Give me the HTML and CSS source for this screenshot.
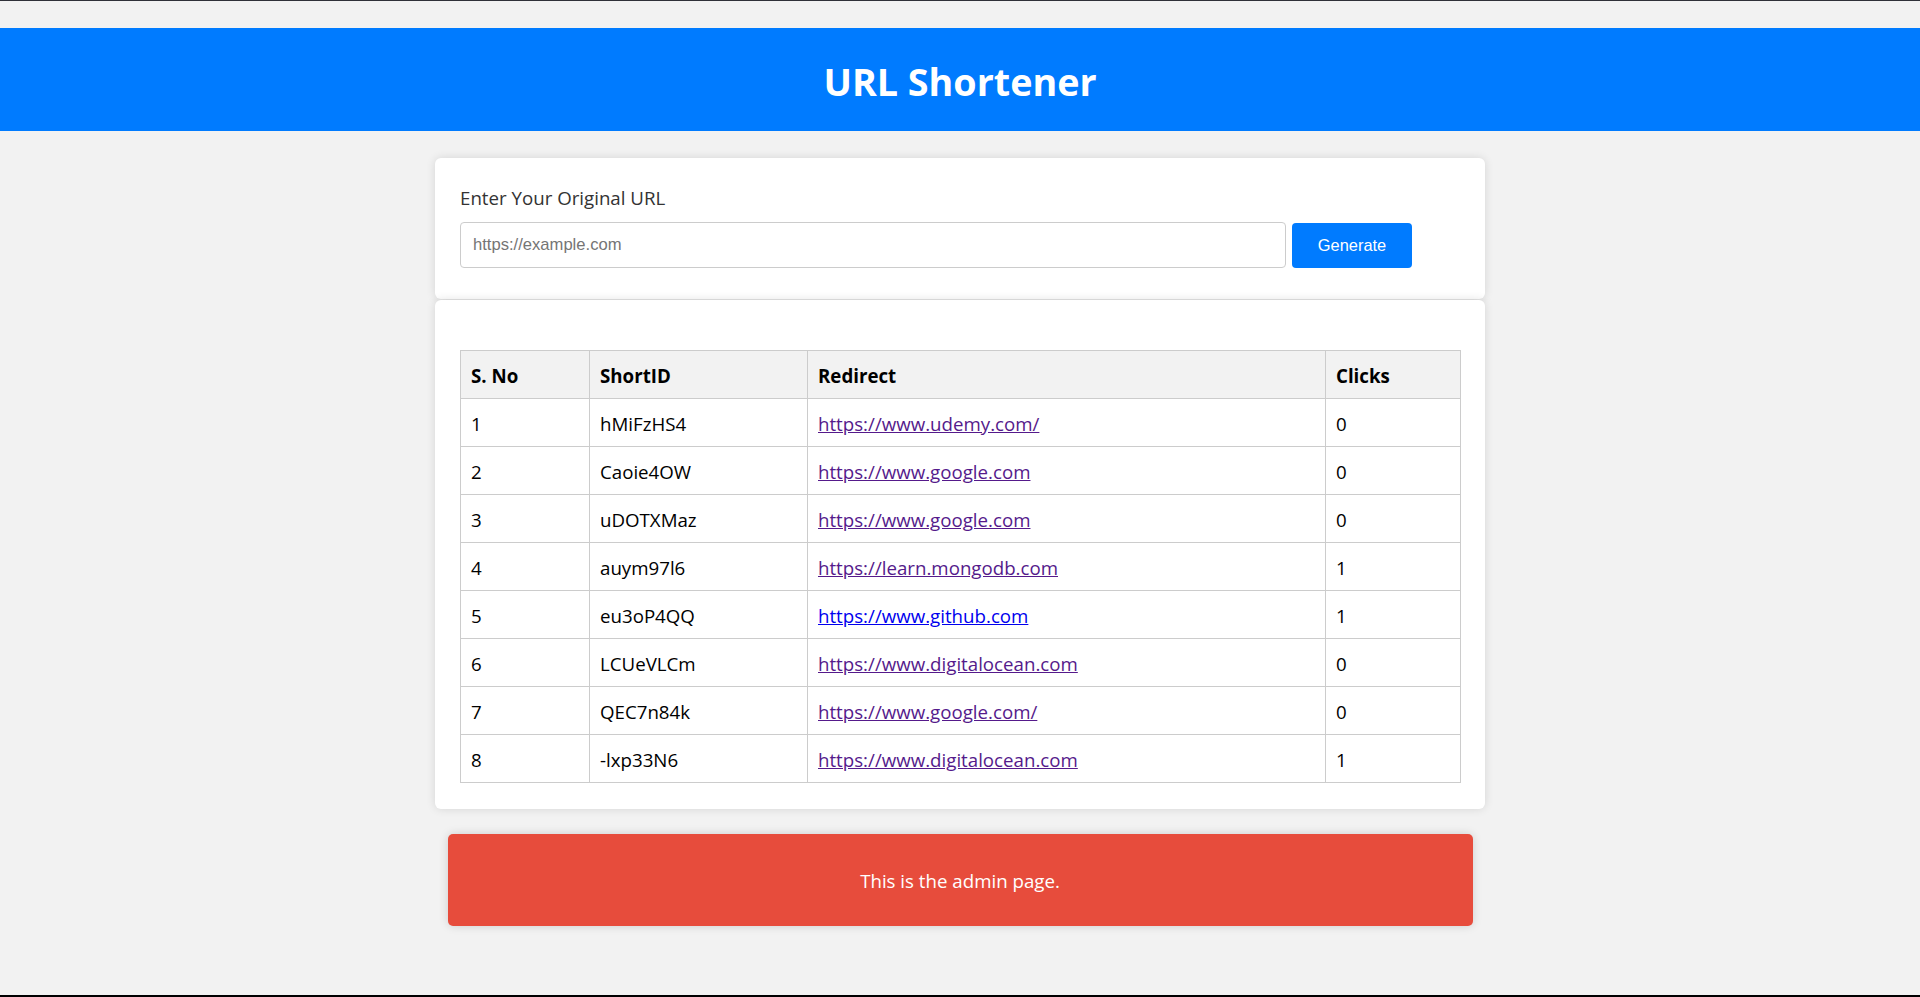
FILE: index.html
```html
<!DOCTYPE html>
<html lang="en">
<head>
<meta charset="utf-8">
<title>URL Shortener</title>
<link rel="stylesheet" href="styles.css">
</head>
<body>
<div class="topline"></div>
<header class="site-header">
  <h1 class="title">URL Shortener</h1>
</header>
<main class="container">
  <section class="card form-card">
    <label class="field-label" for="url">Enter Your Original URL</label>
    <form class="url-form">
      <input class="url-input" id="url" type="text" placeholder="https://example.com">
      <button class="gen-btn" type="button">Generate</button>
    </form>
  </section>
  <section class="card table-card">
    <table class="url-table">
      <colgroup>
        <col class="c1"><col class="c2"><col class="c3"><col class="c4">
      </colgroup>
      <thead>
        <tr><th>S. No</th><th>ShortID</th><th>Redirect</th><th>Clicks</th></tr>
      </thead>
      <tbody>
        <tr><td>1</td><td>hMiFzHS4</td><td><a class="visited" href="#">https://www.udemy.com/</a></td><td>0</td></tr>
        <tr><td>2</td><td>Caoie4OW</td><td><a class="visited" href="#">https://www.google.com</a></td><td>0</td></tr>
        <tr><td>3</td><td>uDOTXMaz</td><td><a class="visited" href="#">https://www.google.com</a></td><td>0</td></tr>
        <tr><td>4</td><td>auym97l6</td><td><a class="visited" href="#">https://learn.mongodb.com</a></td><td>1</td></tr>
        <tr><td>5</td><td>eu3oP4QQ</td><td><a class="fresh" href="#">https://www.github.com</a></td><td>1</td></tr>
        <tr><td>6</td><td>LCUeVLCm</td><td><a class="visited" href="#">https://www.digitalocean.com</a></td><td>0</td></tr>
        <tr><td>7</td><td>QEC7n84k</td><td><a class="visited" href="#">https://www.google.com/</a></td><td>0</td></tr>
        <tr><td>8</td><td>-lxp33N6</td><td><a class="visited" href="#">https://www.digitalocean.com</a></td><td>1</td></tr>
      </tbody>
    </table>
  </section>
  <div class="admin-banner">This is the admin page.</div>
</main>
<div class="bottomline"></div>
</body>
</html>
```
FILE: styles.css
```css
html {
  background: #f2f2f2;
}
body {
  margin: 0;
  font-family: "Open Sans", "Noto Sans", sans-serif;
  font-size: 18.7px;
  color: #333;
  background: #f2f2f2;
  min-height: 997px;
}
.topline {
  height: 1px;
  background: #2f3038;
}
.site-header {
  margin-top: 27px;
  background: #007bff;
  padding: 28px 0 24px;
  text-align: center;
}
.title {
  margin: 0;
  color: #fff;
  font-size: 37.7px;
  line-height: 51px;
  font-weight: 700;
}
.container {
  width: 1050px;
  margin: 27px auto 0;
}
.card {
  background: #fff;
  border-radius: 6px;
  box-shadow: 0 0 10px rgba(0, 0, 0, 0.12);
}
.form-card {
  padding: 27px 25px 31px;
}
.field-label {
  display: block;
  line-height: 26px;
  color: #333;
  margin-bottom: 11px;
}
.url-form {
  display: flex;
  align-items: center;
  gap: 6px;
  margin: 0;
}
.url-input {
  box-sizing: border-box;
  width: 826px;
  height: 46px;
  padding: 0 12px;
  border: 1px solid #ccc;
  border-radius: 4px;
  font-family: "Liberation Sans", Arial, sans-serif;
  font-size: 16.6px;
  color: #333;
  outline: none;
}
.url-input::placeholder {
  color: #757575;
}
.gen-btn {
  box-sizing: border-box;
  width: 120px;
  height: 45px;
  border: none;
  border-radius: 4px;
  background: #007bff;
  color: #fff;
  font-family: "Liberation Sans", Arial, sans-serif;
  font-size: 16.4px;
  cursor: pointer;
}
.table-card {
  margin-top: 1px;
  padding: 25px 25px 26px;
}
.url-table {
  margin-top: 25px;
  width: 1000px;
  border-collapse: collapse;
  table-layout: fixed;
  color: #000;
}
.c1 { width: 129px; }
.c2 { width: 218px; }
.c3 { width: 518px; }
.c4 { width: 135px; }
.url-table th,
.url-table td {
  border: 1px solid #ccc;
  padding: 11px 10px 9px;
  line-height: 27px;
  text-align: left;
  white-space: nowrap;
}
.url-table th {
  background: #f2f2f2;
  font-weight: 700;
}
.url-table a.visited {
  color: #551a8b;
}
.url-table a.fresh {
  color: #0000ee;
}
.admin-banner {
  margin: 25px auto 0;
  width: 1025px;
  box-sizing: border-box;
  padding: 34px 20px 32px;
  line-height: 26px;
  text-align: center;
  color: #fff;
  background: #e74c3c;
  border-radius: 5px;
  box-shadow: 0 0 10px rgba(0, 0, 0, 0.15);
}
.bottomline {
  position: fixed;
  left: 0;
  right: 0;
  bottom: 0;
  height: 2px;
  background: #000;
}
```
